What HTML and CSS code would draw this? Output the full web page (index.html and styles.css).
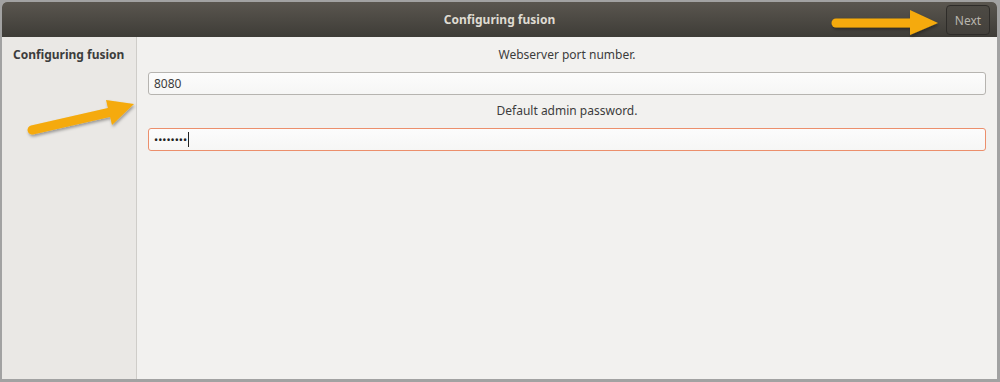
FILE: index.html
```html
<!DOCTYPE html>
<html lang="en">
<head>
    <meta charset="UTF-8">
    <title>Configuring fusion</title>
    <link rel="stylesheet" href="styles.css">
</head>
<body>
    <div class="window">
        <div class="titlebar">
            <span class="title">Configuring fusion</span>
            <button class="next">Next</button>
        </div>
        <div class="content">
            <div class="sidebar">
                <div class="step">Configuring fusion</div>
            </div>
            <div class="main">
                <label class="field-label">Webserver port number.</label>
                <input class="field" type="text" value="8080">
                <label class="field-label">Default admin password.</label>
                <div class="field focused"><span class="dots">&#8226;&#8226;&#8226;&#8226;&#8226;&#8226;&#8226;&#8226;</span><span class="caret"></span></div>
            </div>
        </div>
    </div>

    <!-- annotation arrows -->
    <svg class="arrows" width="1000" height="382" viewBox="0 0 1000 382">
        <defs>
            <filter id="shadow" x="-20%" y="-50%" width="140%" height="200%">
                <feDropShadow dx="1" dy="2" stdDeviation="1.5" flood-color="#000" flood-opacity="0.35"/>
            </filter>
        </defs>
        <g fill="#f5aa0a" stroke="#f5aa0a" filter="url(#shadow)">
            <line x1="836" y1="23" x2="912" y2="23" stroke-width="9" stroke-linecap="round"/>
            <polygon points="910,10 938,23 910,35" stroke="none"/>
            <line x1="32" y1="130" x2="111" y2="112" stroke-width="9" stroke-linecap="round"/>
            <polygon points="106,100 134,104 112,125" stroke="none"/>
        </g>
    </svg>
</body>
</html>
```

FILE: styles.css
```css
html, body {
    margin: 0;
    padding: 0;
}
body {
    width: 1000px;
    height: 382px;
    background: #a2a2a2;
    font-family: "Noto Sans", "DejaVu Sans", sans-serif;
    font-size: 12px;
    position: relative;
    overflow: hidden;
}
.window {
    margin: 2px 3px 0 2px;
    height: 377px;
    display: flex;
    flex-direction: column;
    border-radius: 5px 5px 0 0;
    overflow: hidden;
    background: #f2f1ef;
}
.titlebar {
    height: 35px;
    flex: none;
    background: linear-gradient(#5a564f, #3e3c37);
    display: flex;
    align-items: center;
    justify-content: center;
    position: relative;
}
.title {
    color: #dfdbd2;
    font-weight: bold;
    font-size: 12px;
}
.next {
    position: absolute;
    right: 7px;
    top: 3px;
    width: 44px;
    height: 30px;
    border: 1px solid #2e2c29;
    border-radius: 4px;
    background: linear-gradient(#4d4a44, #44413c);
    color: #b9b6ae;
    font-family: inherit;
    font-size: 12px;
    padding: 0;
}
.content {
    flex: 1;
    display: flex;
}
.sidebar {
    width: 134px;
    flex: none;
    background: #eae8e5;
    border-right: 1px solid #cfcdc9;
    padding-top: 9px;
}
.step {
    padding-left: 11px;
    font-weight: bold;
    color: #3c3c3c;
    line-height: 18px;
}
.main {
    flex: 1;
    padding: 9px 11px 0 11px;
    display: flex;
    flex-direction: column;
}
.field-label {
    text-align: center;
    color: #3c3c3c;
    line-height: 18px;
    margin-bottom: 8px;
}
.field {
    box-sizing: border-box;
    height: 23px;
    border: 1px solid #b6b4b0;
    border-radius: 3px;
    background: linear-gradient(#fcfcfc, #f6f6f5);
    font-family: inherit;
    font-size: 12px;
    color: #3c3c3c;
    padding: 0 5px;
    margin-bottom: 7px;
    outline: none;
    width: 100%;
}
.focused {
    border-color: #ec8f6c;
    display: flex;
    align-items: center;
}
.dots {
    font-size: 11px;
    letter-spacing: 0;
    color: #222;
}
.caret {
    width: 1px;
    height: 15px;
    background: #222;
    margin-left: 1px;
}
.arrows {
    position: absolute;
    left: 0;
    top: 0;
    pointer-events: none;
}
```
